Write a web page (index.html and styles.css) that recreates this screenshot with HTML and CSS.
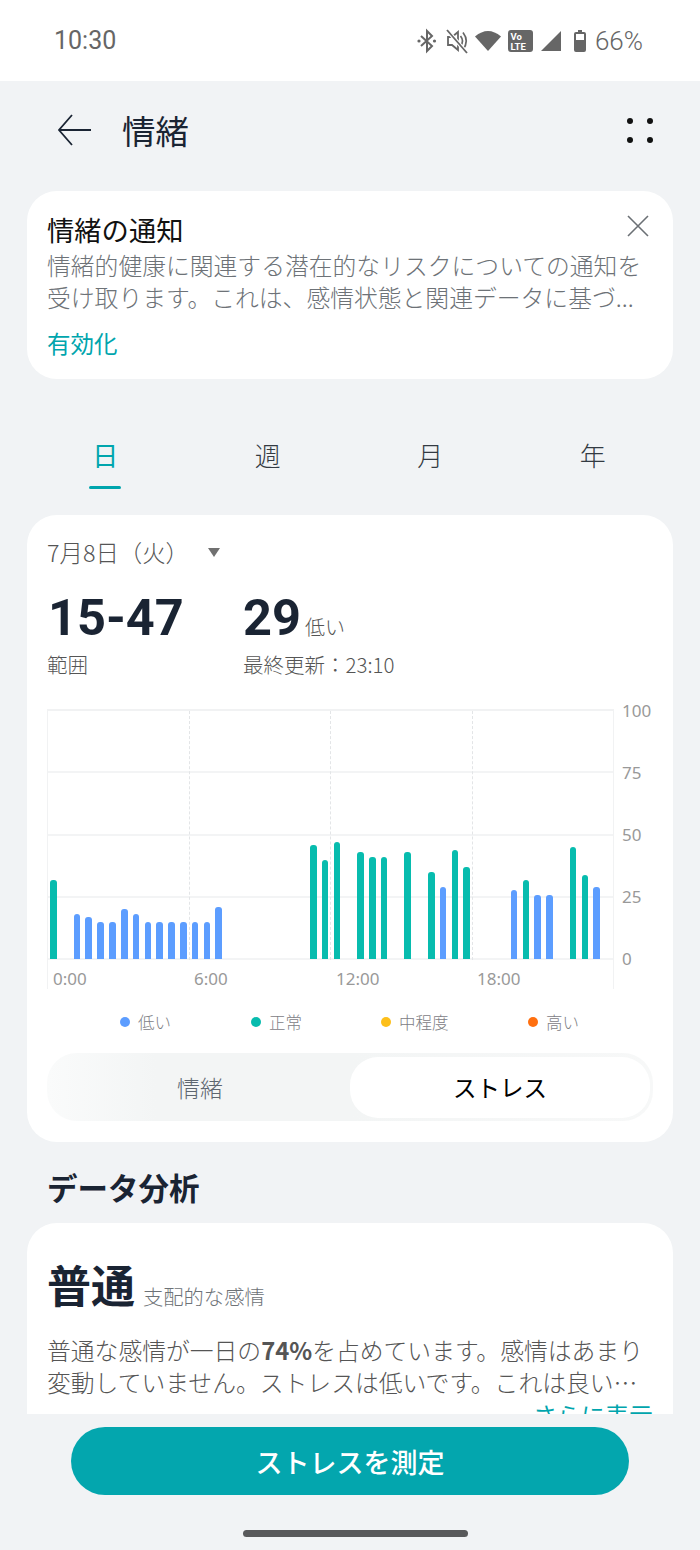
FILE: index.html
```html
<!DOCTYPE html>
<html lang="ja">
<head>
    <meta charset="UTF-8">
    <meta name="viewport" content="width=device-width, initial-scale=1.0">
    <title>情緒</title>
    <link rel="stylesheet" href="styles.css">
</head>
<body>
    <div class="status-bar">
        <span class="time">10:30</span>
        <div class="status-icons">
            <svg width="29" height="26" viewBox="0 0 29 26"><path d="M4 8l11 10-5 5V3l5 5L4 18" fill="none" stroke="#666" stroke-width="2"/><circle cx="2" cy="13" r="1.6" fill="#666"/><circle cx="17.5" cy="13" r="1.6" fill="#666"/></svg>
            <svg width="29" height="26" viewBox="0 0 29 26"><path d="M2 9h4l6-5v18l-6-5H2z" fill="none" stroke="#666" stroke-width="1.8"/><path d="M14.500 8q4 5 0 10M17 4.500q6.500 8.500 0 17" fill="none" stroke="#666" stroke-width="1.7"/><path d="M1 2l20 23" stroke="#fff" stroke-width="4"/><path d="M1 2l20 23" stroke="#666" stroke-width="1.8"/></svg>
            <svg width="33" height="22" viewBox="0 0 33 22"><path d="M13 21L0 6.500q13-11 26 0z" fill="#666"/></svg>
            <svg width="33" height="24" viewBox="0 0 33 24"><rect x="0" y="1" width="25" height="22" rx="3" fill="#666"/><text x="2.500" y="10.500" class="volte">Vo</text><text x="2.500" y="20.500" class="volte">LTE</text></svg>
            <svg width="33" height="22" viewBox="0 0 33 22"><path d="M20 1v20H0z" fill="#666"/></svg>
            <svg width="21" height="24" viewBox="0 0 21 24"><path d="M4 1h4v2h2a2 2 0 0 1 2 2v16a2 2 0 0 1-2 2H2a2 2 0 0 1-2-2V5a2 2 0 0 1 2-2h2z" fill="#666"/><rect x="2" y="5" width="8" height="6" fill="#fff"/></svg>
            <span class="battery">66%</span>
        </div>
    </div>

    <div class="title-bar">
        <svg class="back" width="36" height="34" viewBox="0 0 36 34"><path d="M35 17H3M16 2L3 17l13 15" fill="none" stroke="#1a2433" stroke-width="1.800"/></svg>
        <h1>情緒</h1>
        <div class="more"><i></i><i></i><i></i><i></i></div>
    </div>

    <section class="card notice">
        <h3>情緒の通知</h3>
        <p>情緒的健康に関連する潜在的なリスクについての通知を<br>受け取ります。これは、感情状態と関連データに基づ...</p>
        <a class="link">有効化</a>
        <svg class="close" width="24" height="24" viewBox="0 0 24 24"><path d="M2 2l20 20M22 2L2 22" stroke="#6b7075" stroke-width="1.600"/></svg>
    </section>

    <nav class="tabs">
        <span class="tab active">日</span>
        <span class="tab">週</span>
        <span class="tab">月</span>
        <span class="tab">年</span>
    </nav>

    <section class="card chart-card">
        <div class="date">7月8日（火）<span class="caret"></span></div>
        <div class="stats">
            <div class="stat range">
                <div class="big">15-47</div>
                <div class="small">範囲</div>
            </div>
            <div class="stat">
                <div class="big">29<span class="unit">低い</span></div>
                <div class="small">最終更新：23:10</div>
            </div>
        </div>

        <div class="chart">
            <div class="plot">
                <div class="hline"></div>
                <div class="hline"></div>
                <div class="hline"></div>
                <div class="hline"></div>
                <div class="vline v1"></div>
                <div class="vline v2"></div>
                <div class="vline v3"></div>
                <div class="bars">
                    <i class="g" style="height:32%"></i><i></i>
                    <i class="b" style="height:18%"></i><i class="b" style="height:17%"></i><i class="b" style="height:15%"></i><i class="b" style="height:15%"></i><i class="b" style="height:20%"></i><i class="b" style="height:18%"></i><i class="b" style="height:15%"></i><i class="b" style="height:15%"></i><i class="b" style="height:15%"></i><i class="b" style="height:15%"></i><i class="b" style="height:15%"></i><i class="b" style="height:15%"></i><i class="b" style="height:21%"></i>
                    <i></i><i></i><i></i><i></i><i></i><i></i><i></i>
                    <i class="g" style="height:46%"></i><i class="g" style="height:40%"></i><i class="g" style="height:47%"></i><i></i>
                    <i class="g" style="height:43%"></i><i class="g" style="height:41%"></i><i class="g" style="height:41%"></i><i></i>
                    <i class="g" style="height:43%"></i><i></i>
                    <i class="g" style="height:35%"></i><i class="b" style="height:29%"></i><i class="g" style="height:44%"></i><i class="g" style="height:37%"></i>
                    <i></i><i></i><i></i>
                    <i class="b" style="height:28%"></i><i class="g" style="height:32%"></i><i class="b" style="height:26%"></i><i class="b" style="height:26%"></i><i></i>
                    <i class="g" style="height:45%"></i><i class="g" style="height:34%"></i><i class="b" style="height:29%"></i>
                </div>
            </div>
            <div class="y-axis">
                <span>100</span><span>75</span><span>50</span><span>25</span><span>0</span>
            </div>
            <div class="x-axis">
                <span>0:00</span><span>6:00</span><span>12:00</span><span>18:00</span>
            </div>
        </div>

        <div class="legend">
            <span><i class="dot blue"></i>低い</span>
            <span><i class="dot green"></i>正常</span>
            <span><i class="dot yellow"></i>中程度</span>
            <span><i class="dot orange"></i>高い</span>
        </div>

        <div class="switch">
            <span class="opt">情緒</span>
            <span class="opt on">ストレス</span>
        </div>
    </section>

    <h2 class="section-title">データ分析</h2>

    <div class="clip">
        <section class="card analysis">
            <div class="headline"><strong>普通</strong><span>支配的な感情</span></div>
            <p>普通な感情が一日の<b>74%</b>を占めています。感情はあまり<br>変動していません。ストレスは低いです。これは良い…</p>
            <a class="link more-link">さらに表示</a>
        </section>
    </div>

    <div class="footer">
        <button class="measure">ストレスを測定</button>
        <div class="home-bar"></div>
    </div>
</body>
</html>
```

FILE: styles.css
```css
* {
    box-sizing: border-box;
}

body {
    font-family: "Noto Sans CJK JP", "Noto Sans", sans-serif;
    background-color: #f1f3f5;
    color: #1a2433;
    margin: 0;
    width: 700px;
    height: 1550px;
    overflow: hidden;
}

.status-bar {
    height: 81px;
    background: #fff;
    display: flex;
    justify-content: space-between;
    align-items: center;
    padding: 0 57px 0 54px;
    color: #666;
}

.time {
    font-family: Roboto, sans-serif;
    font-size: 25px;
}

.status-icons {
    display: flex;
    align-items: center;
}

.volte {
    font-family: Roboto, sans-serif;
    font-size: 9.500px;
    font-weight: 700;
    fill: #fff;
}

.battery {
    font-family: Roboto, sans-serif;
    font-size: 26px;
    font-weight: 300;
}

.title-bar {
    height: 110px;
    display: flex;
    align-items: center;
    padding: 0 47px 12px 56px;
}

.title-bar h1 {
    font-size: 33.500px;
    font-weight: 400;
    margin: 0 0 2px 30px;
    flex: 1;
}

.more {
    display: grid;
    grid-template-columns: 6px 6px;
    gap: 13px 14px;
}

.more i {
    width: 6px;
    height: 6px;
    background: #111;
    border-radius: 50%;
}

.card {
    background: #fff;
    margin: 0 27px;
    border-radius: 30px;
}

.notice {
    position: relative;
    height: 188px;
    padding: 20px;
}

.notice h3 {
    font-size: 27.300px;
    font-weight: 400;
    line-height: 36px;
    margin: 0;
    color: #111;
}

.notice p {
    font-size: 23.800px;
    font-weight: 300;
    line-height: 32px;
    margin: 2px 0 0;
    color: #6d7277;
    white-space: nowrap;
}

.link {
    color: #00a5ad;
    font-size: 23.500px;
}

.notice .link {
    display: block;
    margin-top: 14px;
    line-height: 33px;
}

.close {
    position: absolute;
    top: 23px;
    right: 23px;
}

.tabs {
    display: flex;
    margin: 52px 26px 0 24px;
    height: 84px;
}

.tab {
    flex: 1;
    text-align: center;
    font-size: 26px;
    font-weight: 300;
    color: #333a42;
    line-height: 48px;
    position: relative;
}

.tab.active {
    color: #00a5ad;
    font-weight: 400;
}

.tab.active::after {
    content: "";
    position: absolute;
    left: 50%;
    margin-left: -16px;
    top: 55px;
    width: 32px;
    height: 3px;
    border-radius: 2px;
    background: #00a5ad;
}

.chart-card {
    height: 627px;
    padding: 20px;
}

.date {
    font-size: 23.400px;
    font-weight: 300;
    line-height: 34px;
    color: #555;
    display: flex;
    align-items: center;
}

.caret {
    width: 0;
    height: 0;
    border-left: 6.500px solid transparent;
    border-right: 6.500px solid transparent;
    border-top: 9px solid #707070;
    margin-left: 19px;
}

.stats {
    display: flex;
    margin-top: 19px;
}

.stat.range {
    width: 196px;
    padding-left: 1px;
}

.big {
    font-family: Roboto, sans-serif;
    font-size: 50.500px;
    font-weight: 700;
    line-height: 60px;
    height: 60px;
}

.unit {
    font-family: "Noto Sans CJK JP", sans-serif;
    font-size: 20px;
    font-weight: 300;
    color: #555;
    margin-left: 4px;
}

.small {
    font-size: 20.500px;
    font-weight: 300;
    line-height: 32px;
    color: #555;
}

.stat.range .small {
    margin-left: -1px;
}

.chart {
    position: relative;
    width: 604px;
    height: 280px;
    margin-top: 29px;
}

.plot {
    position: relative;
    width: 567px;
    height: 251px;
    border: solid #f1f2f3;
    border-width: 2px 1px 0 1px;
    display: flex;
    flex-direction: column;
}

.hline {
    flex: 1;
    border-bottom: 2px solid #f3f4f5;
}

.vline {
    position: absolute;
    top: 0;
    bottom: 0;
    width: 0;
    border-left: 1px dashed #e3e5e7;
}

.v1 { left: 141px; }
.v2 { left: 282px; }
.v3 { left: 424px; }

.bars {
    position: absolute;
    left: 2px;
    right: 0;
    top: 0;
    bottom: 1px;
    display: flex;
    align-items: flex-end;
    gap: 5.180px;
}

.bars i {
    display: block;
    width: 6.650px;
    flex: none;
    border-radius: 3px 3px 0 0;
}

.bars .b { background: #5c9dff; }
.bars .g { background: #07bcae; }

.y-axis {
    position: absolute;
    left: 575px;
    top: -8px;
    height: 268px;
    display: flex;
    flex-direction: column;
    justify-content: space-between;
    font-family: "Noto Sans", sans-serif;
    font-size: 17px;
    line-height: 20px;
    color: #999;
}

.x-axis {
    position: absolute;
    left: 0;
    top: 251px;
    width: 567px;
    height: 29px;
    border: solid #f1f2f3;
    border-width: 0 1px;
    font-family: "Noto Sans", sans-serif;
    font-size: 17px;
    color: #999;
}

.x-axis span {
    position: absolute;
    top: 7px;
}

.x-axis span:nth-child(1) { left: 5px; }
.x-axis span:nth-child(2) { left: 146px; }
.x-axis span:nth-child(3) { left: 288px; }
.x-axis span:nth-child(4) { left: 429px; }

.legend {
    display: flex;
    margin: 19px 0 0 73px;
    font-size: 16.500px;
    font-weight: 300;
    line-height: 28px;
    color: #7d8085;
}

.legend span {
    display: flex;
    flex: none;
    align-items: center;
    gap: 8px;
    width: 131px;
}

.legend span:nth-child(2) {
    width: 130px;
}

.legend span:nth-child(3) {
    width: 147px;
}

.dot {
    width: 10px;
    height: 10px;
    border-radius: 50%;
}

.blue { background: #5c9dff; }
.green { background: #07bcae; }
.yellow { background: #fdbf1a; }
.orange { background: #ff6f0f; }

.switch {
    display: flex;
    margin-top: 17px;
    height: 68px;
    border-radius: 30px;
    background: linear-gradient(90deg, #fafbfb, #f3f5f5 18%, #f3f5f5 50%, #f7f8f8);
    padding: 4px 3px 3px;
    align-items: stretch;
}

.opt {
    flex: 1;
    text-align: center;
    font-size: 23px;
    font-weight: 300;
    line-height: 60px;
    color: #5d6670;
}

.opt.on {
    flex: none;
    width: 300px;
    background: #fff;
    border-radius: 28px;
    color: #000;
    font-size: 23.500px;
    font-weight: 400;
}

.section-title {
    font-size: 30.500px;
    font-weight: 700;
    line-height: 42px;
    margin: 24px 47px 15px;
}

.clip {
    height: 191px;
    overflow: hidden;
}

.analysis {
    height: 250px;
    padding: 23px 20px;
}

.headline {
    display: flex;
    align-items: flex-end;
    gap: 8px;
}

.headline strong {
    font-size: 44px;
    font-weight: 700;
    line-height: 76px;
}

.headline span {
    font-size: 20.300px;
    font-weight: 300;
    line-height: 34px;
    margin-bottom: 9px;
    color: #6d7277;
}

.analysis p {
    font-size: 23.800px;
    font-weight: 300;
    line-height: 32px;
    margin: 12px 0 0;
    color: #555;
    white-space: nowrap;
}

.analysis p b {
    font-weight: 700;
}

.analysis .more-link {
    display: block;
    text-align: right;
    font-size: 24px;
    line-height: 28px;
    margin-top: 3px;
}

.footer {
    padding-top: 13px;
}

.measure {
    display: block;
    width: 558px;
    height: 68px;
    margin: 0 auto;
    border: none;
    border-radius: 34px;
    background: #03a6ae;
    color: #fff;
    font-family: inherit;
    font-size: 27px;
    font-weight: 500;
}

.home-bar {
    width: 225px;
    height: 7px;
    margin: 35px 0 0 243px;
    border-radius: 4px;
    background: #58595b;
}
```
